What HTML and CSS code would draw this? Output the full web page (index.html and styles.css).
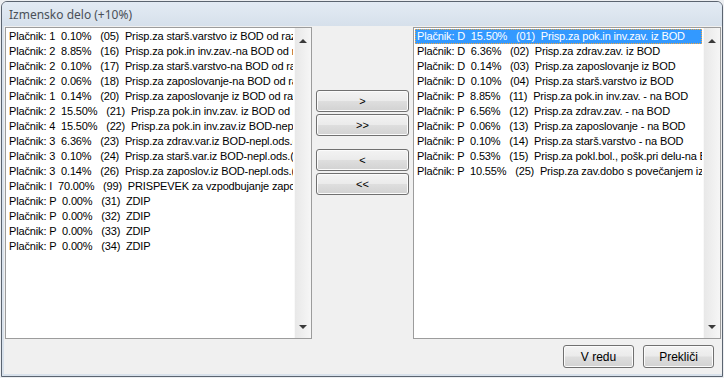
FILE: index.html
```html
<!DOCTYPE html>
<html lang="sl">
<head>
    <meta charset="UTF-8">
    <link rel="stylesheet" href="styles.css">
</head>
<body>

<div class="window">
    <div class="titlebar">Izmensko delo (+10%)</div>

    <div class="client">
        <div class="lists">
            <div class="listbox left">
                <div class="items">
                    <div class="item">Plačnik: 1  0.10%   (05)  Prisp.za starš.varstvo iz BOD od razlike</div>
                    <div class="item">Plačnik: 2  8.85%   (16)  Prisp.za pok.in inv.zav.-na BOD od razlike</div>
                    <div class="item">Plačnik: 2  0.10%   (17)  Prisp.za starš.varstvo-na BOD od razlike</div>
                    <div class="item">Plačnik: 2  0.06%   (18)  Prisp.za zaposlovanje-na BOD od razlike</div>
                    <div class="item">Plačnik: 1  0.14%   (20)  Prisp.za zaposlovanje iz BOD od razlike</div>
                    <div class="item">Plačnik: 2  15.50%   (21)  Prisp.za pok.in inv.zav. iz BOD od razlike</div>
                    <div class="item">Plačnik: 4  15.50%   (22)  Prisp.za pok.in inv.zav.iz BOD-nepl.ods.</div>
                    <div class="item">Plačnik: 3  6.36%   (23)  Prisp.za zdrav.var.iz BOD-nepl.ods.(bol.)</div>
                    <div class="item">Plačnik: 3  0.10%   (24)  Prisp.za starš.var.iz BOD-nepl.ods.(bol.)</div>
                    <div class="item">Plačnik: 3  0.14%   (26)  Prisp.za zaposlov.iz BOD-nepl.ods.(bol.)</div>
                    <div class="item">Plačnik: I  70.00%   (99)  PRISPEVEK za vzpodbujanje zaposlovanja</div>
                    <div class="item">Plačnik: P  0.00%   (31)  ZDIP</div>
                    <div class="item">Plačnik: P  0.00%   (32)  ZDIP</div>
                    <div class="item">Plačnik: P  0.00%   (33)  ZDIP</div>
                    <div class="item">Plačnik: P  0.00%   (34)  ZDIP</div>
                </div>
                <div class="scrollbar">
                    <span class="arrow up"></span>
                    <span class="arrow down"></span>
                </div>
            </div>

            <div class="movers">
                <button class="btn">&gt;</button>
                <button class="btn">&gt;&gt;</button>
                <button class="btn group">&lt;</button>
                <button class="btn">&lt;&lt;</button>
            </div>

            <div class="listbox right">
                <div class="items">
                    <div class="item selected">Plačnik: D  15.50%   (01)  Prisp.za pok.in inv.zav. iz BOD</div>
                    <div class="item">Plačnik: D  6.36%   (02)  Prisp.za zdrav.zav. iz BOD</div>
                    <div class="item">Plačnik: D  0.14%   (03)  Prisp.za zaposlovanje iz BOD</div>
                    <div class="item">Plačnik: D  0.10%   (04)  Prisp.za starš.varstvo iz BOD</div>
                    <div class="item">Plačnik: P  8.85%   (11)  Prisp.za pok.in inv.zav. - na BOD</div>
                    <div class="item">Plačnik: P  6.56%   (12)  Prisp.za zdrav.zav. - na BOD</div>
                    <div class="item">Plačnik: P  0.06%   (13)  Prisp.za zaposlovanje - na BOD</div>
                    <div class="item">Plačnik: P  0.10%   (14)  Prisp.za starš.varstvo - na BOD</div>
                    <div class="item">Plačnik: P  0.53%   (15)  Prisp.za pokl.bol., pošk.pri delu-na BOD</div>
                    <div class="item">Plačnik: P  10.55%   (25)  Prisp.za zav.dobo s povečanjem iz BOD</div>
                </div>
                <div class="scrollbar">
                    <span class="arrow up"></span>
                    <span class="arrow down"></span>
                </div>
            </div>
        </div>

        <div class="actions">
            <button class="btn dialog">V redu</button>
            <button class="btn dialog">Prekliči</button>
        </div>
    </div>
</div>

</body>
</html>
```

FILE: styles.css
```css
body {
    margin: 0;
    background: #eceef1;
    font-family: "Liberation Sans", Arial, sans-serif;
}
.window {
    margin: 1px 0 0 1px;
    width: 722px;
    height: 376px;
    box-sizing: border-box;
    border: 1px solid #5b6470;
    border-radius: 6px 6px 0 0;
    background: #d8e1eb;
    display: flex;
    flex-direction: column;
    overflow: hidden;
}
.titlebar {
    flex: none;
    height: 24px;
    padding-left: 7px;
    display: flex;
    align-items: center;
    font-family: "Noto Sans", "Open Sans", sans-serif;
    font-size: 12px;
    color: #4a5058;
    background: linear-gradient(#e3ebf4, #d6e0eb);
}
.client {
    flex: 1;
    margin: 0 0 2px 2px;
    padding: 1px 1px 0 1px;
    background: #f0f0f0;
    display: flex;
    flex-direction: column;
}
.lists {
    display: flex;
    height: 312px;
}
.listbox {
    box-sizing: border-box;
    height: 312px;
    border: 1px solid #9c9c9c;
    background: #fff;
    display: flex;
}
.listbox.left {
    width: 307px;
}
.listbox.right {
    width: 308px;
}
.items {
    flex: 1;
    min-width: 0;
    padding: 1px;
    overflow: hidden;
}
.item {
    height: 15px;
    line-height: 15px;
    padding-left: 2px;
    font-size: 11px;
    letter-spacing: -0.15px;
    color: #000;
    white-space: pre;
    overflow: hidden;
}
.item.selected {
    background: #3399ff;
    color: #fff;
    outline: 1px dotted #f2a640;
    outline-offset: -1px;
}
.scrollbar {
    width: 17px;
    flex: none;
    background: linear-gradient(to right, #e8e8e8, #f6f6f6);
    border-left: 1px solid #f9f9f9;
    display: flex;
    flex-direction: column;
    justify-content: space-between;
    align-items: center;
    padding: 11px 0 9px;
    box-sizing: border-box;
}
.arrow {
    width: 0;
    height: 0;
    border-left: 4px solid transparent;
    border-right: 4px solid transparent;
}
.arrow.up {
    border-bottom: 4px solid #3a3a3a;
}
.arrow.down {
    border-top: 4px solid #3a3a3a;
}
.movers {
    width: 93px;
    margin: 0 4px;
    padding-top: 63px;
    display: flex;
    flex-direction: column;
}
.btn {
    box-sizing: border-box;
    width: 93px;
    height: 22px;
    padding: 0;
    border: 1px solid #707070;
    border-radius: 3px;
    background: linear-gradient(#f3f3f3 0%, #ebebeb 48%, #dedede 52%, #d2d2d2 100%);
    box-shadow: inset 0 0 0 1px #fbfbfb;
    font-family: "Liberation Sans", Arial, sans-serif;
    font-size: 11px;
    color: #000;
}
.btn + .btn {
    margin-top: 2px;
}
.btn.group {
    margin-top: 13px;
}
.actions {
    display: flex;
    justify-content: flex-end;
    gap: 9px;
    margin-top: 6px;
    padding-right: 7px;
}
.btn.dialog {
    width: 71px;
    height: 23px;
    margin-top: 0;
    font-size: 12px;
}
```
